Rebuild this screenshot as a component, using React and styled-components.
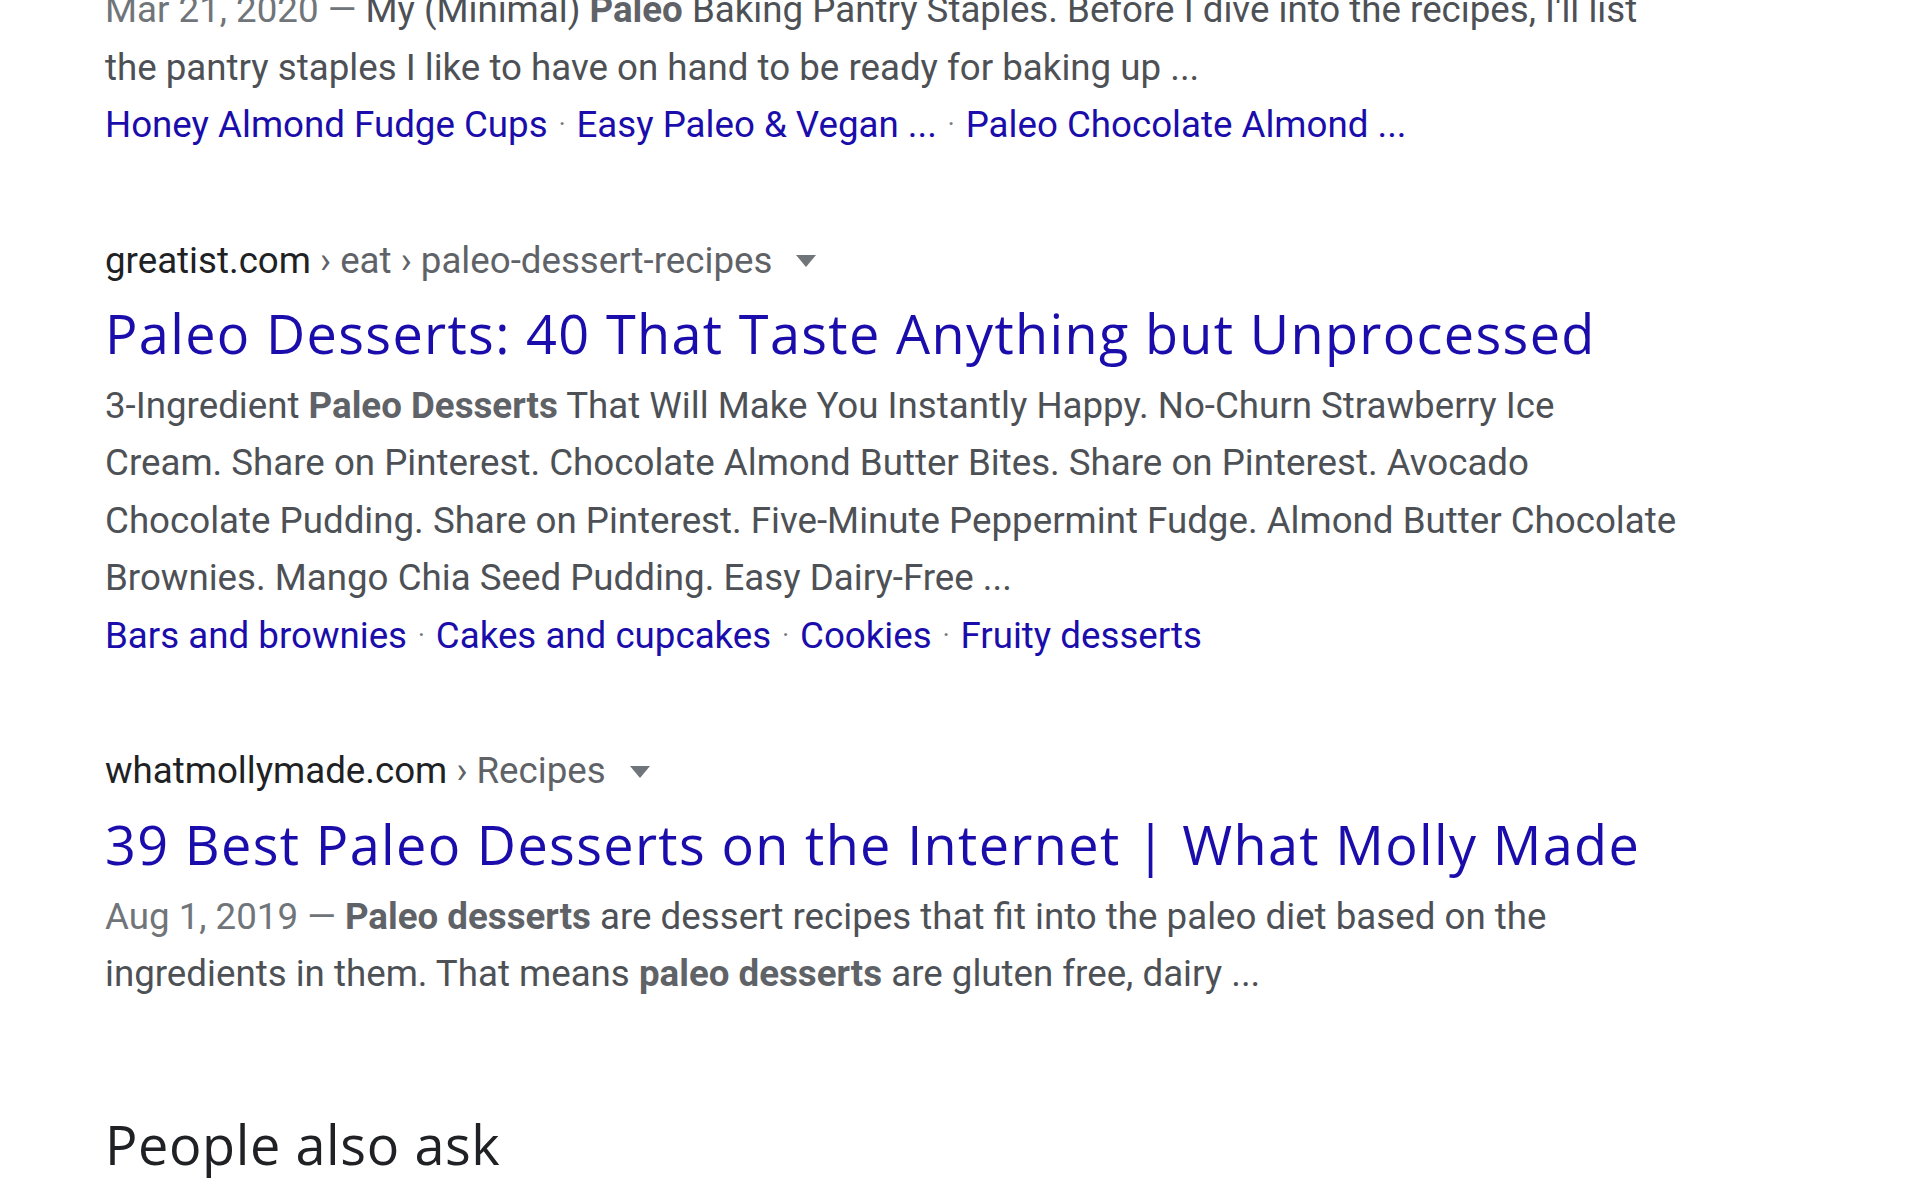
import React from 'react';
import styled, { createGlobalStyle } from 'styled-components';

const GlobalStyle = createGlobalStyle`
    html, body {
        margin: 0;
        background: #fff;
    }
    body {
        font-family: Roboto, "Liberation Sans", Arial, sans-serif;
        -webkit-font-smoothing: antialiased;
    }
`;

const Page = styled('div')`
    width: 1920px;
    height: 1200px;
    overflow: hidden;
    box-sizing: border-box;
    padding-left: 105px;
    background: #fff;
`;

const Results = styled('div')`
    display: flex;
    flex-direction: column;
    margin-top: -19px;
`;

const Result = styled('div')`
    display: flex;
    flex-direction: column;
    margin-bottom: ${(props) => props.$last ? '104px' : '78px'};
`;

const Crumbs = styled('div')`
    display: flex;
    align-items: center;
    font-size: 36.7px;
    line-height: 57.5px;
    color: #5f6368;
    white-space: nowrap;
`;

const Domain = styled('span')`
    color: #202124;
`;

const Caret = styled('span')`
    display: inline-block;
    width: 0;
    height: 0;
    margin-left: 24px;
    margin-top: 2px;
    border-left: 10px solid transparent;
    border-right: 10px solid transparent;
    border-top: 12px solid #70757a;
`;

const Title = styled('a')`
    display: block;
    margin: 7px 0 6px;
    font-family: "Open Sans", Roboto, sans-serif;
    font-size: 54px;
    letter-spacing: 1.35px;
    line-height: 74.75px;
    color: #1a0dab;
    text-decoration: none;
    white-space: nowrap;
`;

const Snippet = styled('div')`
    font-size: 36.7px;
    line-height: 57.5px;
    color: #4d5156;
    white-space: nowrap;
    b {
        font-weight: 700;
        color: #5f6368;
    }
`;

const Date = styled('span')`
    color: #70757a;
`;

const Sitelinks = styled('div')`
    font-size: 36.7px;
    line-height: 57.5px;
    color: #70757a;
    white-space: nowrap;
`;

const Sitelink = styled('a')`
    color: #1a0dab;
    text-decoration: none;
`;

const Dot = styled('span')`
    display: inline-block;
    margin: 0 11px;
    font-size: 26px;
    vertical-align: 4px;
`;

const Heading = styled('div')`
    font-family: "Open Sans", Roboto, sans-serif;
    font-size: 54px;
    letter-spacing: 0.6px;
    line-height: 74.75px;
    color: #202124;
`;

const Links = ({ items }) => (
    <Sitelinks>
        {items.map((item, i) => (
            <React.Fragment key={item}>
                {i > 0 && <Dot>·</Dot>}
                <Sitelink href='#'>{item}</Sitelink>
            </React.Fragment>
        ))}
    </Sitelinks>
);

const Breadcrumb = ({ domain, path }) => (
    <Crumbs>
        <Domain>{domain}</Domain>&nbsp;{path}
        <Caret />
    </Crumbs>
);

export default function App() {
    return (
        <Page>
            <GlobalStyle />
            <Results>
                <Result>
                    <Snippet>
                        <Date>Mar 21, 2020 — </Date>My (Minimal) <b>Paleo</b> Baking Pantry Staples. Before I dive into the recipes, I'll list<br />
                        the pantry staples I like to have on hand to be ready for baking up ...
                    </Snippet>
                    <Links items={['Honey Almond Fudge Cups', 'Easy Paleo & Vegan ...', 'Paleo Chocolate Almond ...']} />
                </Result>
                <Result>
                    <Breadcrumb domain='greatist.com' path='› eat › paleo-dessert-recipes' />
                    <Title href='#'>Paleo Desserts: 40 That Taste Anything but Unprocessed</Title>
                    <Snippet>
                        3-Ingredient <b>Paleo Desserts</b> That Will Make You Instantly Happy. No-Churn Strawberry Ice<br />
                        Cream. Share on Pinterest. Chocolate Almond Butter Bites. Share on Pinterest. Avocado<br />
                        Chocolate Pudding. Share on Pinterest. Five-Minute Peppermint Fudge. Almond Butter Chocolate<br />
                        Brownies. Mango Chia Seed Pudding. Easy Dairy-Free ...
                    </Snippet>
                    <Links items={['Bars and brownies', 'Cakes and cupcakes', 'Cookies', 'Fruity desserts']} />
                </Result>
                <Result $last>
                    <Breadcrumb domain='whatmollymade.com' path='› Recipes' />
                    <Title href='#'>39 Best Paleo Desserts on the Internet | What Molly Made</Title>
                    <Snippet>
                        <Date>Aug 1, 2019 — </Date><b>Paleo desserts</b> are dessert recipes that fit into the paleo diet based on the<br />
                        ingredients in them. That means <b>paleo desserts</b> are gluten free, dairy ...
                    </Snippet>
                </Result>
                <Heading>People also ask</Heading>
            </Results>
        </Page>
    );
}
